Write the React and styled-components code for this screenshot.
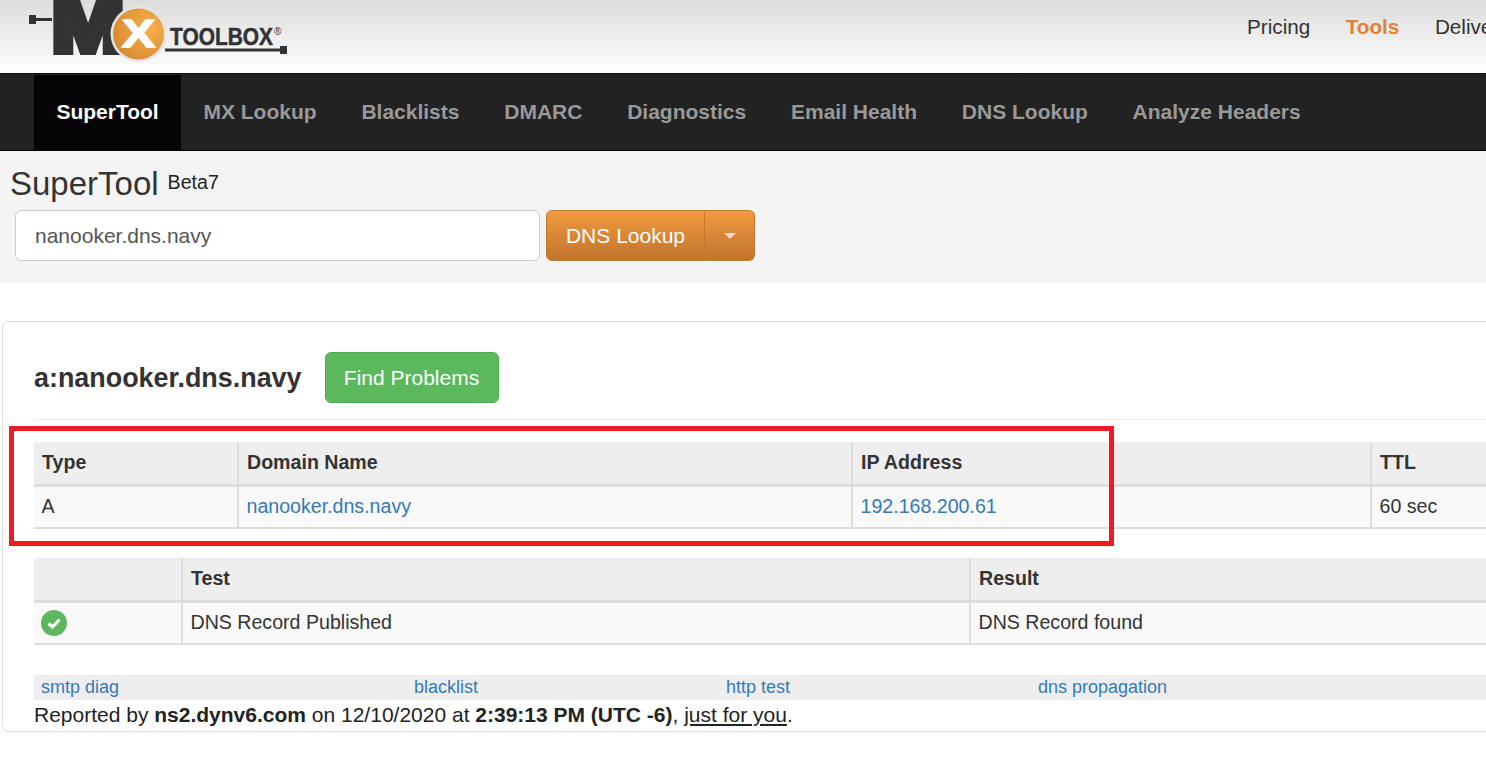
import React from 'react';
import styled, { createGlobalStyle } from 'styled-components';

const Global = createGlobalStyle`
    html, body {
        margin: 0;
        padding: 0;
        height: 100%;
        overflow: hidden;
        background: #fff;
    }
    body {
        font-family: "Liberation Sans", Arial, sans-serif;
        font-size: 19.6px;
        color: #333;
    }
`
const navItems = ['MX Lookup', 'Blacklists', 'DMARC', 'Diagnostics', 'Email Health', 'DNS Lookup', 'Analyze Headers'];

function Logo() {
    return (
        <LogoSvg viewBox="0 0 262 64" width="262" height="64">
            <defs>
                <radialGradient id="orb" cx="0.72" cy="0.38" r="0.75">
                    <stop offset="0" stopColor="#f6b04a" />
                    <stop offset="1" stopColor="#d98a32" />
                </radialGradient>
            </defs>
            <rect x="1" y="15" width="7" height="9" fill="#333" />
            <rect x="8" y="18" width="16" height="3" fill="#333" />
            <text x="24" y="51" fontFamily="Liberation Sans" fontWeight="700" fontSize="78" textLength="72" lengthAdjust="spacingAndGlyphs" fill="#333" stroke="#333" strokeWidth="8" strokeLinejoin="miter">M</text>
            <circle cx="110.5" cy="34" r="28" fill="#e4e4e4" />
            <circle cx="110.5" cy="34" r="25.5" fill="url(#orb)" />
            <text x="110.5" y="47" textAnchor="middle" fontFamily="Liberation Sans" fontWeight="700" fontSize="38" textLength="33" lengthAdjust="spacingAndGlyphs" fill="#fff" stroke="#fff" strokeWidth="1.5">X</text>
            <text x="142" y="45" fontFamily="Liberation Sans" fontWeight="700" fontSize="24" textLength="103" lengthAdjust="spacingAndGlyphs" fill="#333" stroke="#333" strokeWidth="0.5">TOOLBOX</text>
            <text x="246" y="35" fontFamily="Liberation Sans" fontSize="10" fill="#333">®</text>
            <rect x="137" y="48.5" width="116" height="3" fill="#333" />
            <rect x="252" y="46" width="7" height="8" fill="#333" />
        </LogoSvg>
    );
}

function CheckIcon() {
    return (
        <svg width="26" height="26" viewBox="0 0 26 26">
            <circle cx="13" cy="13" r="13" fill="#5cb85c" />
            <path d="M7.5 13.5 L11.5 17 L18.5 9.5" fill="none" stroke="#fff" strokeWidth="3.2" />
        </svg>
    );
}

export default function App() {
    return (
        <Page>
            <Global />
            <TopBar>
                <Logo />
                <TopLinks>
                    <TopLink>Pricing</TopLink>
                    <TopLink $active>Tools</TopLink>
                    <TopLink>Delivery</TopLink>
                </TopLinks>
            </TopBar>
            <Nav>
                <NavItem $active>SuperTool</NavItem>
                {navItems.map((n) => <NavItem key={n}>{n}</NavItem>)}
            </Nav>
            <ToolArea>
                <Title>SuperTool<Beta>Beta7</Beta></Title>
                <SearchRow>
                    <SearchInput readOnly value="nanooker.dns.navy" />
                    <SplitMain>DNS Lookup</SplitMain>
                    <SplitCaret><Caret /></SplitCaret>
                </SearchRow>
            </ToolArea>
            <Panel>
                <PanelHead>
                    <Heading>a:nanooker.dns.navy</Heading>
                    <GreenButton>Find Problems</GreenButton>
                </PanelHead>
                <Table $gap="22px">
                    <colgroup>
                        <col width="204" /><col width="614" /><col width="519" /><col width="200" />
                    </colgroup>
                    <thead>
                        <tr><Th>Type</Th><Th>Domain Name</Th><Th>IP Address</Th><Th>TTL</Th></tr>
                    </thead>
                    <tbody>
                        <tr>
                            <Td>A</Td>
                            <Td><Link>nanooker.dns.navy</Link></Td>
                            <Td><Link>192.168.200.61</Link></Td>
                            <Td>60 sec</Td>
                        </tr>
                    </tbody>
                </Table>
                <Table $gap="29px">
                    <colgroup>
                        <col width="148" /><col width="788" /><col width="601" />
                    </colgroup>
                    <thead>
                        <tr><Th></Th><Th>Test</Th><Th>Result</Th></tr>
                    </thead>
                    <tbody>
                        <tr>
                            <IconTd><CheckIcon /></IconTd>
                            <Td>DNS Record Published</Td>
                            <Td>DNS Record found</Td>
                        </tr>
                    </tbody>
                </Table>
                <LinkBar>
                    <BarLink $w="373px">smtp diag</BarLink>
                    <BarLink $w="312px">blacklist</BarLink>
                    <BarLink $w="312px">http test</BarLink>
                    <BarLink $w="312px">dns propagation</BarLink>
                </LinkBar>
                <Report>
                    Reported by <b>ns2.dynv6.com</b> on 12/10/2020 at <b>2:39:13 PM (UTC -6)</b>, <u>just for you</u>.
                </Report>
            </Panel>
            <Highlight />
        </Page>
    );
}
const Page = styled.div`
    position: relative;
    width: 1486px;
    height: 776px;
    overflow: hidden;
`
const TopBar = styled.div`
    display: flex;
    height: 73px;
    padding-left: 28px;
    background: linear-gradient(#dcdcdc, #ffffff);
    white-space: nowrap;
    overflow: hidden;
`
const LogoSvg = styled.svg`
    flex: none;
    display: block;
`
const TopLinks = styled.div`
    display: flex;
    gap: 35.5px;
    margin-left: 957px;
    padding-top: 15px;
`
const TopLink = styled.span`
    font-size: 20.7px;
    line-height: 24px;
    font-weight: ${(p) => (p.$active ? 700 : 400)};
    color: ${(p) => (p.$active ? '#dd8439' : '#333')};
`
const Nav = styled.div`
    display: flex;
    box-sizing: border-box;
    height: 78px;
    padding: 1px 0 0 34px;
    background: #222;
    border-top: 1px solid #0c0c0c;
    border-bottom: 1px solid #000;
`
const NavItem = styled.div`
    padding: 0 22.4px;
    line-height: 74px;
    height: 75px;
    font-size: 21px;
    font-weight: 700;
    color: ${(p) => (p.$active ? '#fff' : '#999')};
    background: ${(p) => (p.$active ? '#050505' : 'transparent')};
`
const ToolArea = styled.div`
    box-sizing: border-box;
    height: 132px;
    padding: 14px 0 0 10px;
    background: #f4f4f4;
`
const Title = styled.div`
    display: flex;
    font-size: 33px;
    line-height: 38px;
    color: #333;
`
const Beta = styled.span`
    margin-left: 9px;
    font-size: 19.6px;
    line-height: 34px;
    color: #222;
`
const SearchRow = styled.div`
    display: flex;
    margin: 7px 0 0 5px;
`
const SearchInput = styled.input`
    box-sizing: border-box;
    width: 525px;
    height: 51px;
    padding: 0 19px;
    border: 1px solid #ccc;
    border-radius: 6px;
    background: #fff;
    font-family: "Liberation Sans", Arial, sans-serif;
    font-size: 21px;
    color: #555;
    outline: none;
`
const SplitMain = styled.div`
    box-sizing: border-box;
    width: 159px;
    height: 51px;
    margin-left: 6px;
    line-height: 49px;
    text-align: center;
    font-size: 21px;
    color: #fff;
    background: linear-gradient(#f29a3f, #bf742d);
    border: 1px solid #c27a30;
    border-radius: 6px 0 0 6px;
`
const SplitCaret = styled.div`
    display: flex;
    align-items: center;
    justify-content: center;
    box-sizing: border-box;
    width: 50px;
    height: 51px;
    background: linear-gradient(#f29a3f, #bf742d);
    border: 1px solid #c27a30;
    border-left: none;
    border-radius: 0 6px 6px 0;
`
const Caret = styled.div`
    width: 0;
    height: 0;
    border-left: 6px solid transparent;
    border-right: 6px solid transparent;
    border-top: 6px solid #f6dcc0;
`
const Panel = styled.div`
    box-sizing: border-box;
    width: 1600px;
    height: 411px;
    margin: 38px 0 0 2px;
    padding: 30px 0 0 31px;
    border: 1px solid #ddd;
    border-radius: 6px;
    background: #fff;
`
const PanelHead = styled.div`
    display: flex;
    align-items: center;
    gap: 23px;
    height: 51px;
    padding-bottom: 16px;
    border-bottom: 1px solid #eee;
`
const Heading = styled.h2`
    margin: 0;
    font-size: 26.9px;
    line-height: 46px;
    font-weight: 700;
    color: #333;
`
const GreenButton = styled.div`
    box-sizing: border-box;
    width: 174px;
    height: 51px;
    line-height: 49px;
    text-align: center;
    font-size: 21px;
    color: #fff;
    background: #5cb85c;
    border: 1px solid #4cae4c;
    border-radius: 6px;
`
const Table = styled.table`
    width: 1537px;
    margin-top: ${(p) => p.$gap};
    border-collapse: collapse;
    table-layout: fixed;
    font-size: 19.6px;
`
const Th = styled.th`
    box-sizing: border-box;
    height: 43px;
    padding: 0 8px;
    text-align: left;
    font-weight: 700;
    background: #eee;
    border-bottom: 3px solid #ddd;
    border-left: 2px solid #ddd;
    &:first-child {
        border-left: none;
    }
`
const Td = styled.td`
    box-sizing: border-box;
    height: 43px;
    padding: 0 7.5px;
    background: #f9f9f9;
    border-bottom: 2px solid #ddd;
    border-left: 2px solid #ddd;
    &:first-child {
        border-left: none;
    }
`
const IconTd = styled(Td)`
    padding: 0 7px;
    line-height: 0;
`
const Link = styled.span`
    color: #337ab7;
`
const LinkBar = styled.div`
    display: flex;
    width: 1537px;
    height: 25px;
    margin-top: 30px;
    background: #eee;
`
const BarLink = styled.span`
    box-sizing: border-box;
    width: ${(p) => p.$w};
    padding-left: 7px;
    font-size: 18px;
    line-height: 25px;
    color: #337ab7;
`
const Report = styled.div`
    font-size: 21px;
    line-height: 30px;
    color: #222;
`
const Highlight = styled.div`
    position: absolute;
    left: 9px;
    top: 426px;
    box-sizing: border-box;
    width: 1105px;
    height: 120px;
    border: 5px solid #ed1c24;
`
